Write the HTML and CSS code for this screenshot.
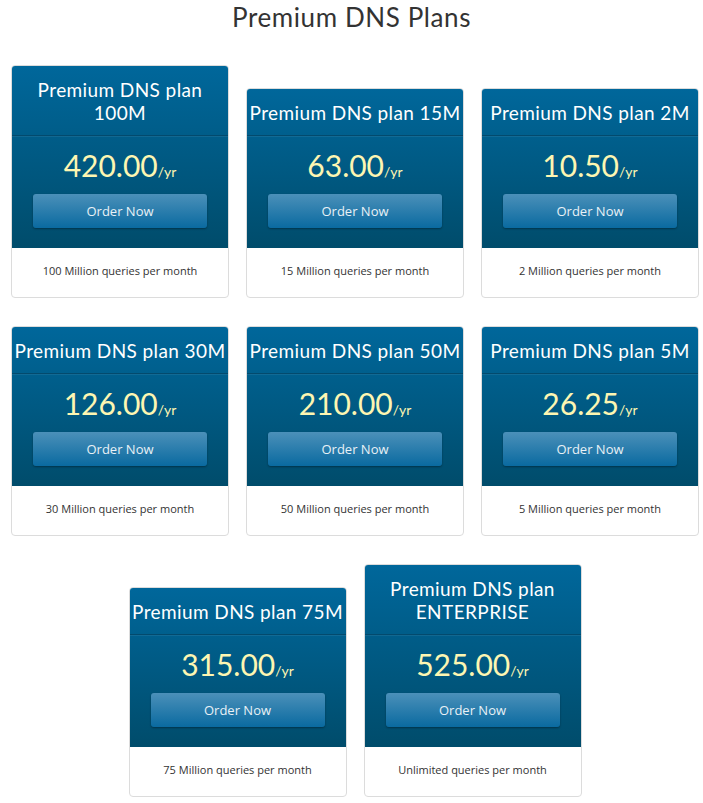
FILE: index.html
```html
<!DOCTYPE html>
<html lang="en">
<head>
<meta charset="utf-8">
<title>Premium DNS Plans</title>
<link rel="stylesheet" href="styles.css">
</head>
<body>
<h1 class="page-title">Premium DNS Plans</h1>
<div class="plans">
  <div class="row">
    <div class="card">
      <div class="card-head">
        <div class="card-title">Premium DNS plan<br>100M</div>
        <div class="card-price">
          <div class="price">420.00<span class="cycle">/yr</span></div>
          <a class="btn">Order Now</a>
        </div>
      </div>
      <div class="card-foot">100 Million queries per month</div>
    </div>
    <div class="card">
      <div class="card-head">
        <div class="card-title">Premium DNS plan 15M</div>
        <div class="card-price">
          <div class="price">63.00<span class="cycle">/yr</span></div>
          <a class="btn">Order Now</a>
        </div>
      </div>
      <div class="card-foot">15 Million queries per month</div>
    </div>
    <div class="card">
      <div class="card-head">
        <div class="card-title">Premium DNS plan 2M</div>
        <div class="card-price">
          <div class="price">10.50<span class="cycle">/yr</span></div>
          <a class="btn">Order Now</a>
        </div>
      </div>
      <div class="card-foot">2 Million queries per month</div>
    </div>
  </div>
  <div class="row">
    <div class="card">
      <div class="card-head">
        <div class="card-title">Premium DNS plan 30M</div>
        <div class="card-price">
          <div class="price">126.00<span class="cycle">/yr</span></div>
          <a class="btn">Order Now</a>
        </div>
      </div>
      <div class="card-foot">30 Million queries per month</div>
    </div>
    <div class="card">
      <div class="card-head">
        <div class="card-title">Premium DNS plan 50M</div>
        <div class="card-price">
          <div class="price">210.00<span class="cycle">/yr</span></div>
          <a class="btn">Order Now</a>
        </div>
      </div>
      <div class="card-foot">50 Million queries per month</div>
    </div>
    <div class="card">
      <div class="card-head">
        <div class="card-title">Premium DNS plan 5M</div>
        <div class="card-price">
          <div class="price">26.25<span class="cycle">/yr</span></div>
          <a class="btn">Order Now</a>
        </div>
      </div>
      <div class="card-foot">5 Million queries per month</div>
    </div>
  </div>
  <div class="row">
    <div class="card">
      <div class="card-head">
        <div class="card-title">Premium DNS plan 75M</div>
        <div class="card-price">
          <div class="price">315.00<span class="cycle">/yr</span></div>
          <a class="btn">Order Now</a>
        </div>
      </div>
      <div class="card-foot">75 Million queries per month</div>
    </div>
    <div class="card">
      <div class="card-head">
        <div class="card-title">Premium DNS plan<br>ENTERPRISE</div>
        <div class="card-price">
          <div class="price">525.00<span class="cycle">/yr</span></div>
          <a class="btn">Order Now</a>
        </div>
      </div>
      <div class="card-foot">Unlimited queries per month</div>
    </div>
  </div>
</div>
</body>
</html>
```
FILE: styles.css
```css
html, body {
  margin: 0;
  padding: 0;
  background: #fff;
}
body {
  font-family: "Open Sans", "Liberation Sans", sans-serif;
  color: #333;
}
.page-title {
  margin: 0;
  height: 65px;
  line-height: 34px;
  text-align: center;
  font-family: Lato, "Open Sans", sans-serif;
  font-weight: 400;
  font-size: 26px;
  letter-spacing: 0.6px;
  color: #333;
}
.plans {
  width: 688px;
  margin-left: 11px;
  display: flex;
  flex-direction: column;
  gap: 28px;
}
.row {
  display: flex;
  justify-content: center;
  align-items: flex-end;
  gap: 17px;
}
.card {
  position: relative;
  width: 218px;
  box-sizing: border-box;
  border: 1px solid #dcdcdc;
  border-radius: 4px;
  background: #fff;
}
.card::after {
  content: "";
  position: absolute;
  left: 12%;
  right: 12%;
  bottom: 3px;
  height: 8px;
  border-radius: 50%;
  box-shadow: 0 4px 4px rgba(0, 0, 0, 0.5);
  z-index: -1;
}
.card-head {
  background: linear-gradient(#00679b, #004c6b);
  border-radius: 3px 3px 0 0;
  color: #fff;
  text-align: center;
}
.card-title {
  padding: 12px 0 11px;
  font-family: Lato, "Open Sans", sans-serif;
  font-weight: 400;
  font-size: 19px;
  line-height: 23px;
  letter-spacing: 0.4px;
  white-space: nowrap;
  border-bottom: 1px solid #034a6d;
}
.card-price {
  border-top: 1px solid rgba(255, 255, 255, 0.07);
  padding: 8px 21px 20px;
}
.price {
  height: 40px;
  font-family: Lato, "Open Sans", sans-serif;
  font-weight: 400;
  font-size: 30px;
  line-height: 40px;
  color: #fdf6b2;
}
.cycle {
  font-size: 14px;
  line-height: 1;
  color: #fdf6b2;
}
.btn {
  display: block;
  margin-top: 9px;
  height: 34px;
  line-height: 34px;
  border-radius: 3px;
  background: linear-gradient(#4b90b9, #0a6aa0);
  box-shadow: 0 1px 2px rgba(0, 0, 0, 0.35);
  color: #e9f1f6;
  font-size: 13px;
  text-align: center;
}
.card-foot {
  height: 49px;
  line-height: 46px;
  text-align: center;
  font-size: 11px;
  color: #333;
}
```
